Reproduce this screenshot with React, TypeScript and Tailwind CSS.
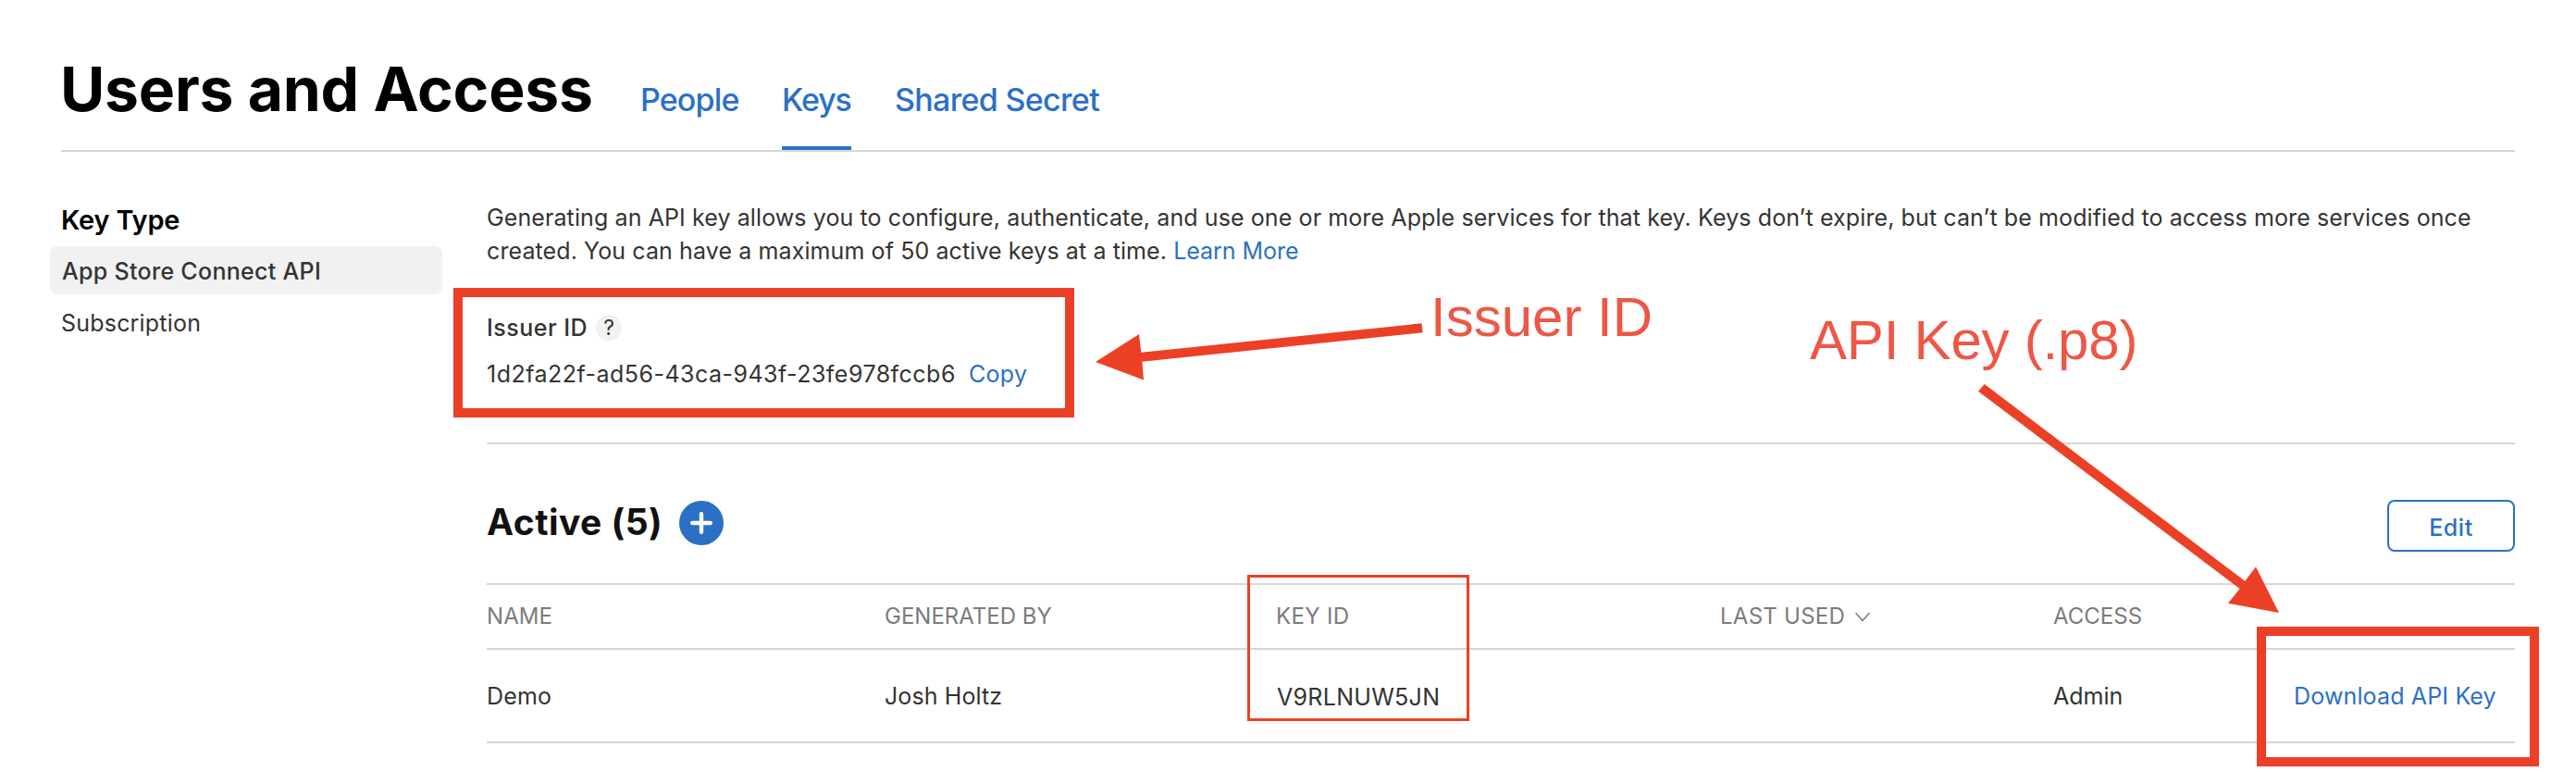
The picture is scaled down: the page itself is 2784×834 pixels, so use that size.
const ROW = "grid grid-cols-[430px_424px_479px_360px_259px_1fr] border-[#d6d6d6]";

function Header() {
  return (
    <header className="mx-[66px] flex h-[164px] items-baseline border-b-2 border-[#d6d6d6] pt-[63px] whitespace-nowrap">
      <h1 className="-ml-px w-[627px] text-[66px] leading-[66px] font-bold tracking-[-0.23px] text-black">Users and Access</h1>
      <nav className="flex text-[34px] leading-[40px] font-medium text-[#2b70c5]">
        <a className="mr-[46px] w-[107px] tracking-[-0.85px]">People</a>
        <a className="mr-[47px] w-[75px] border-b-4 border-[#2b70c5] pb-[30px] tracking-[-1.1px]">Keys</a>
        <a className="tracking-[-0.68px]">Shared Secret</a>
      </nav>
    </header>
  );
}

function Sidebar() {
  return (
    <aside className="ml-[54px] w-[424px] pt-[59px]">
      <h2 className="mb-[13px] pl-3 text-[29px] leading-[30px] font-semibold tracking-[-0.2px] text-black">Key Type</h2>
      <a className="mb-1 flex h-[52px] items-center rounded-lg bg-[#f1f1f1] pt-[2px] pl-[13px] font-medium tracking-[0.3px]">App Store Connect API</a>
      <a className="flex h-[52px] items-center pt-[2px] pl-3 tracking-[0.2px]">Subscription</a>
    </aside>
  );
}

function KeysTable() {
  return (
    <div className="border-t-2 border-[#d6d6d6]">
      <div className={`${ROW} h-[70px] items-center border-b-2 text-[24px] text-[#7b7b7b]`}>
        <span className="tracking-[0.1px]">NAME</span>
        <span>GENERATED BY</span>
        <span className="-ml-px tracking-[0.35px]">KEY ID</span>
        <span className="flex items-center tracking-[0.25px]">
          LAST USED
          <svg className="ml-[11px]" width="16" height="11" viewBox="0 0 16 11" fill="none" stroke="currentColor" strokeWidth="1.5">
            <path d="M0.5 1.3L8 9.3L15.5 1.3" />
          </svg>
        </span>
        <span>ACCESS</span>
      </div>
      <div className={`${ROW} h-[101px] items-center border-b-2`}>
        <span className="pt-px tracking-[0.2px]">Demo</span>
        <span className="tracking-[0.1px]">Josh Holtz</span>
        <span className="pt-[3px] tracking-[0.29px]">V9RLNUW5JN</span>
        <span />
        <span>Admin</span>
        <a className="pt-px pl-px tracking-[0.15px] text-[#2b70c5]">Download API Key</a>
      </div>
    </div>
  );
}

function Content() {
  return (
    <main className="ml-12 w-[2192px] whitespace-nowrap">
      <section className="h-[316px] border-b-2 border-[#d6d6d6] pt-[53px]">
        <p className="leading-[36px] tracking-[0.1px]">
          Generating an API key allows you to configure, authenticate, and use one or more Apple services for that key. Keys don’t expire, but can’t be modified to access more services once
          <br />
          created. You can have a maximum of 50 active keys at a time. <a className="tracking-[-0.05px] text-[#2b70c5]">Learn More</a>
        </p>
        <div className="mt-[50px] flex h-[30px] items-center">
          <span className="font-medium tracking-[0.5px]">Issuer ID</span>
          <span className="ml-[9px] flex size-7 items-center justify-center rounded-full bg-[#f1f1f1] text-[23px] leading-none">?</span>
        </div>
        <div className="mt-5 flex h-[30px] items-center">
          <span className="tracking-[0.48px]">1d2fa22f-ad56-43ca-943f-23fe978fccb6</span>
          <a className="ml-[14px] tracking-[0.3px] text-[#2b70c5]">Copy</a>
        </div>
      </section>
      <section>
        <div className="flex h-[150px] items-start pt-[60px]">
          <h2 className="text-[39px] leading-[48px] font-bold tracking-[0.48px] text-[#111]">Active (5)</h2>
          <span className="mt-px ml-[18px] flex size-12 items-center justify-center rounded-full bg-[#2b70c5]">
            <svg width="24" height="24" viewBox="0 0 24 24" stroke="white" strokeWidth="4.4" strokeLinecap="round">
              <path d="M12 2.2V21.8M2.2 12H21.8" />
            </svg>
          </span>
          <button className="ml-auto h-14 w-[138px] rounded-lg border-2 border-[#2b70c5] pt-[3px] font-medium tracking-[0.6px] text-[#2b70c5]">Edit</button>
        </div>
        <KeysTable />
      </section>
    </main>
  );
}

function Annotations() {
  return (
    <div className="pointer-events-none absolute inset-0 font-['Liberation_Sans',sans-serif] text-[60px] leading-[60px] whitespace-nowrap text-[#ee5645]">
      <div className="absolute top-[311px] left-[490px] h-[140px] w-[671px] border-10 border-[#ec4026]" />
      <div className="absolute top-[621px] left-[1348px] h-[158px] w-[240px] border-3 border-[#ec4026]" />
      <div className="absolute top-[677px] left-[2439px] h-[151px] w-[305px] border-10 border-[#ec4026]" />
      <span className="absolute top-[313px] left-[1546px]">Issuer ID</span>
      <span className="absolute top-[338px] left-[1956px] tracking-[-0.2px]">API Key (.p8)</span>
      <svg className="absolute inset-0" width="2784" height="834" viewBox="0 0 2784 834" fill="#ec4026">
        <path d="M1184 391L1231 361L1233.3 380.7L1536.4 349.3L1537.6 359.3L1234.4 390.7L1236 410.4Z" />
        <path d="M2463 662L2438 612.3L2426.3 627.7L2144.7 415L2138 422.7L2420.6 636L2408 651.7Z" />
      </svg>
    </div>
  );
}

export default function App() {
  return (
    <div className="relative h-[834px] w-[2784px] overflow-hidden bg-white font-['Inter',sans-serif] text-[25px] leading-[30px] text-[#333]">
      <Header />
      <div className="flex">
        <Sidebar />
        <Content />
      </div>
      <Annotations />
    </div>
  );
}
